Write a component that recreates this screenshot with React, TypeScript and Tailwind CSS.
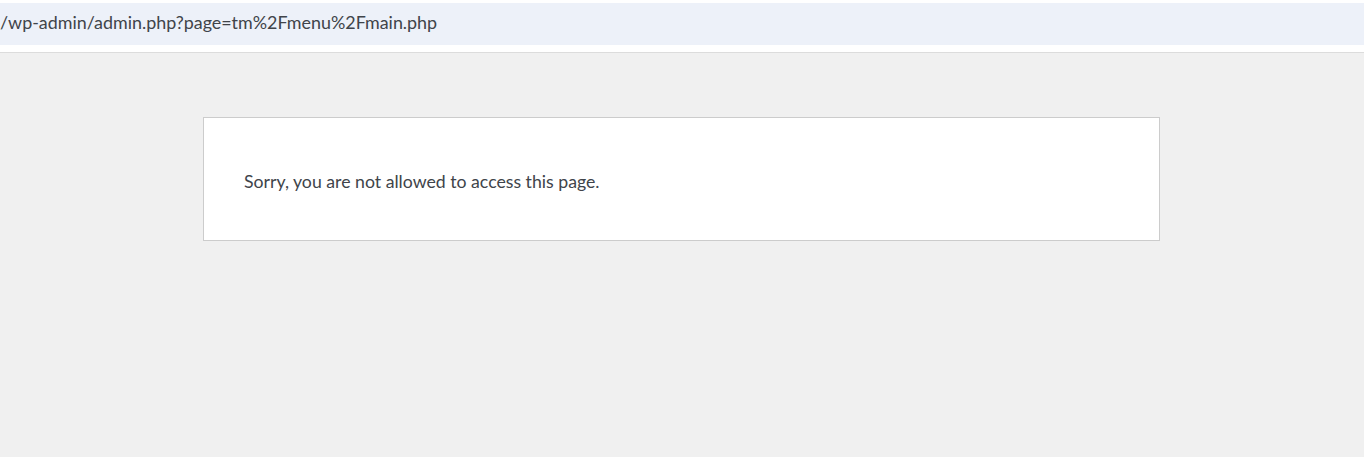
export default function App() {
  return (
    <div className="w-[1364px] h-[457px] bg-[#f0f0f0] overflow-hidden" style={{ fontFamily: 'Lato, "Noto Sans", sans-serif' }}>
      <div className="bg-white pt-[3px] pb-[7px]">
        <div className="h-[42px] bg-[#edf1f9] pt-[9px] text-[17.9px] leading-[21px] text-[#40444a] whitespace-nowrap">
          /wp-admin/admin.php?page=tm%2Fmenu%2Fmain.php
        </div>
      </div>
      <div className="h-[1px] bg-[#dcdcdc]" />
      <div className="pt-[64px] pl-[203px]">
        <div className="w-[957px] h-[124px] bg-white border border-[#cccccc] pt-[53px] pl-[40px] text-[17.7px] leading-[21px] text-[#40444a] whitespace-nowrap">
          Sorry, you are not allowed to access this page.
        </div>
      </div>
    </div>
  );
}
